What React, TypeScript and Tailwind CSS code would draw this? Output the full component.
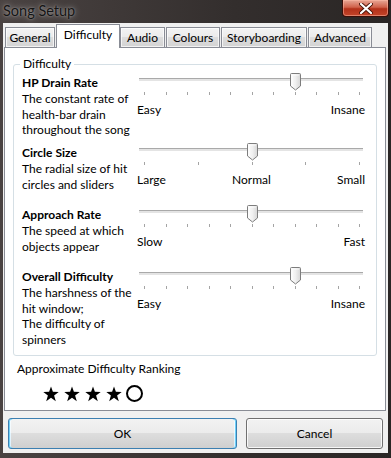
import React from 'react'

const font = { fontFamily: 'Lato, "Noto Sans", sans-serif' }

type SliderProps = {
  ticks: number
  value: number
  labels: string[]
}

function Thumb() {
  return (
    <svg width="11" height="18" viewBox="0 0 11 18">
      <defs>
        <linearGradient id="thumbFill" x1="0" y1="0" x2="1" y2="0">
          <stop offset="0" stopColor="#fdfdfd" />
          <stop offset="0.5" stopColor="#f0f0f0" />
          <stop offset="1" stopColor="#d6d6d6" />
        </linearGradient>
      </defs>
      <path
        d="M1.5 0.5 H9.5 Q10.5 0.5 10.5 1.5 V13 L5.5 17 L0.5 13 V1.5 Q0.5 0.5 1.5 0.5 Z"
        fill="url(#thumbFill)"
        stroke="#7d7d7d"
      />
      <path d="M2 13 V2 H9" fill="none" stroke="#ffffff" strokeWidth="1" opacity="0.8" />
    </svg>
  )
}

function Slider({ ticks, value, labels }: SliderProps) {
  const step = 215 / (ticks - 1)
  return (
    <div className="relative h-[55px] w-[224px]">
      <div className="absolute left-0 right-0 top-[3px] h-[3px] border-t border-[#a9a9a9] bg-[#e4e4e4]" />
      {Array.from({ length: ticks }).map((_, i) => (
        <div
          key={i}
          className="absolute top-[17px] h-[3px] w-px bg-[#a4a4a4]"
          style={{ left: Math.round(5 + i * step) }}
        />
      ))}
      <div className="absolute top-[-2px]" style={{ left: Math.round(5 + value * step) - 5 }}>
        <Thumb />
      </div>
      <div className="absolute left-[-2px] right-[-2px] top-[27px] flex justify-between leading-[16px]">
        {labels.map((l) => (
          <span key={l}>{l}</span>
        ))}
      </div>
    </div>
  )
}

type Row = {
  title: string
  lines: string[]
  ticks: number
  value: number
  labels: string[]
}

const rows: Row[] = [
  {
    title: 'HP Drain Rate',
    lines: ['The constant rate of', 'health-bar drain', 'throughout the song'],
    ticks: 11,
    value: 7,
    labels: ['Easy', 'Insane'],
  },
  {
    title: 'Circle Size',
    lines: ['The radial size of hit', 'circles and sliders'],
    ticks: 5,
    value: 2,
    labels: ['Large', 'Normal', 'Small'],
  },
  {
    title: 'Approach Rate',
    lines: ['The speed at which', 'objects appear'],
    ticks: 11,
    value: 5,
    labels: ['Slow', 'Fast'],
  },
  {
    title: 'Overall Difficulty',
    lines: ['The harshness of the', 'hit window;', 'The difficulty of', 'spinners'],
    ticks: 11,
    value: 7,
    labels: ['Easy', 'Insane'],
  },
]

const tabs = [
  { name: 'General', w: 'w-[50px]' },
  { name: 'Difficulty', w: 'w-[64px]', active: true },
  { name: 'Audio', w: 'w-[45px]' },
  { name: 'Colours', w: 'w-[54px]' },
  { name: 'Storyboarding', w: 'w-[86px]' },
  { name: 'Advanced', w: 'w-[64px]' },
]

function Star() {
  return (
    <svg width="16" height="16" viewBox="0 0 16 16">
      <path d="M8 0.4 L9.9 5.8 L15.7 5.9 L11.1 9.5 L12.8 15.2 L8 11.8 L3.2 15.2 L4.9 9.5 L0.3 5.9 L6.1 5.8 Z" fill="#000" />
    </svg>
  )
}

export default function App() {
  return (
    <div
      className="flex h-[458px] w-[391px] flex-col overflow-hidden bg-[linear-gradient(90deg,#4a4342,#332e2d_60%,#2a2625)] text-[12px] text-black"
      style={font}
    >
      {/* title bar */}
      <div className="relative flex h-[23px] shrink-0 items-start">
        <span className="ml-[3px] mt-[2px] text-[14.5px] leading-[18px] text-[#141414] [text-shadow:0_0_6px_rgba(255,255,255,0.55),0_0_2px_rgba(255,255,255,0.4)]">
          Song Setup
        </span>
        <div className="absolute right-[2px] top-0 flex h-[17px] w-[47px] items-center justify-center rounded-b-[4px] border border-t-0 border-[#3b0e08] bg-[linear-gradient(180deg,#e8a796,#d0624b_45%,#b3311a_55%,#c4452a)] shadow-[inset_0_0_0_1px_rgba(255,190,170,0.5)]">
          <svg width="14" height="11" viewBox="0 0 14 11">
            <path d="M2 1 L12 10 M12 1 L2 10" stroke="#4a1408" strokeWidth="4" strokeLinecap="round" />
            <path d="M2 1 L12 10 M12 1 L2 10" stroke="#ffffff" strokeWidth="2.2" strokeLinecap="round" />
          </svg>
        </div>
      </div>

      {/* client area */}
      <div className="mx-[3px] mb-[5px] flex flex-1 flex-col bg-[#f0f0f0]">
        {/* tab strip */}
        <div className="flex h-[24px] items-end pl-[2px]">
          {tabs.map((t) =>
            t.active ? (
              <div
                key={t.name}
                className={`${t.w} relative z-10 -mb-px flex h-[24px] items-start justify-center border border-b-0 border-[#898c95] bg-white pt-[2px] leading-[16px]`}
              >
                {t.name}
              </div>
            ) : (
              <div
                key={t.name}
                className={`${t.w} flex h-[20px] items-start justify-center border border-b-0 border-[#898c95] bg-[linear-gradient(180deg,#f3f3f3,#ebebeb_50%,#dddddd_50%,#d3d3d3)] pt-[2px] leading-[16px] shadow-[inset_0_0_0_1px_rgba(255,255,255,0.7)] [&:not(:last-child)]:mr-px`}
              >
                {t.name}
              </div>
            ),
          )}
        </div>

        {/* tab panel */}
        <div className="ml-[1px] mr-[2px] h-[364px] border border-[#898c95] bg-white">
          <div className="relative ml-[8px] mt-[16px] h-[292px] w-[364px] rounded-[3px] border border-[#d5dfe5] pl-[8px] pt-[10px]">
            <span className="absolute left-[6px] top-[-9px] bg-white px-[3px] leading-[16px]">Difficulty</span>
            {rows.map((r) => (
              <div key={r.title} className="mb-[7px] flex min-h-[55px]">
                <div className="w-[117px] leading-[15.75px]">
                  <div className="font-bold">{r.title}</div>
                  {r.lines.map((l) => (
                    <div key={l}>{l}</div>
                  ))}
                </div>
                <Slider ticks={r.ticks} value={r.value} labels={r.labels} />
              </div>
            ))}
          </div>
          <div className="ml-[12px] mt-[5px] leading-[16px]">Approximate Difficulty Ranking</div>
          <div className="ml-[38px] mt-[8px] flex items-center gap-[5px]">
            <Star />
            <Star />
            <Star />
            <Star />
            <div className="ml-[-1px] h-[17px] w-[17px] rounded-full border-[2.5px] border-black bg-white" />
          </div>
        </div>

        {/* buttons */}
        <div className="mt-[7px] flex gap-[9px] px-[5px]">
          <button className="flex h-[31px] w-[229px] items-center justify-center rounded-[3px] border border-[#3c7fb1] bg-[linear-gradient(180deg,#eaf6fd,#d9f0fc_50%,#bee6fd_50%,#a7d9f5)] shadow-[inset_0_0_0_1px_#6fd0f8,inset_0_0_0_2px_rgba(255,255,255,0.6)]">
            <span className="m-[2px] flex h-full w-full items-center justify-center rounded-[2px] bg-[linear-gradient(180deg,#f2f2f2,#ebebeb_50%,#dddddd_50%,#cfcfcf)]">
              OK
            </span>
          </button>
          <button className="flex h-[31px] w-[137px] items-center justify-center rounded-[3px] border border-[#707070] bg-[linear-gradient(180deg,#f2f2f2,#ebebeb_50%,#dddddd_50%,#cfcfcf)] shadow-[inset_0_0_0_1px_rgba(255,255,255,0.8)]">
            Cancel
          </button>
        </div>
      </div>
    </div>
  )
}
